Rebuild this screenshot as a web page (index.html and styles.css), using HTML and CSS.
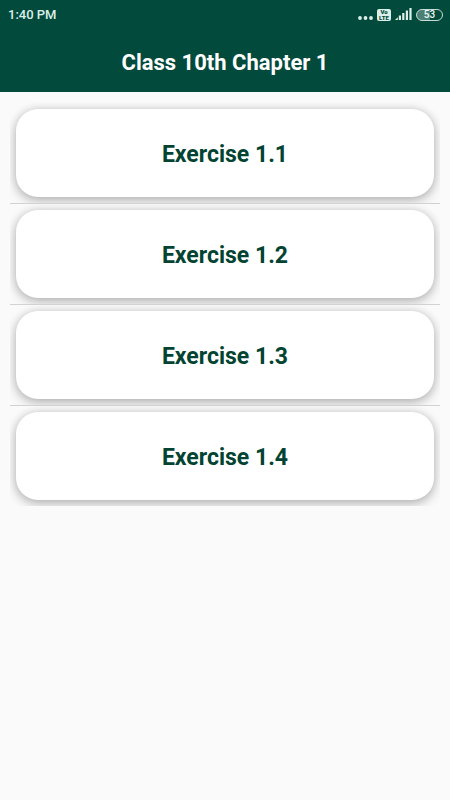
FILE: index.html
```html
<!DOCTYPE html>
<html lang="en">
<head>
<meta charset="utf-8">
<meta name="viewport" content="width=device-width, initial-scale=1">
<title>Class 10th Chapter 1</title>
<link rel="stylesheet" href="styles.css">
</head>
<body>
<header class="top">
  <div class="status">
    <span class="clock">1:40 PM</span>
    <div class="indicators">
      <svg width="15" height="16" viewBox="0 0 15 16" aria-hidden="true"><g fill="#dcefe9"><circle cx="2" cy="11" r="1.9"/><circle cx="7.5" cy="11" r="1.9"/><circle cx="13" cy="11" r="1.9"/></g></svg>
      <span class="volte"><span>Vo</span><span>LTE</span></span>
      <svg width="17" height="16" viewBox="0 0 17 16" aria-hidden="true"><g fill="#dcefe9"><path d="M0 13l2.8-2.8V13z"/><rect x="3.8" y="8.5" width="2.2" height="4.5"/><rect x="7.2" y="6" width="2.2" height="7"/><rect x="10.8" y="3.5" width="2.2" height="9.5"/><rect x="14.4" y="1" width="2.2" height="12"/></g></svg>
      <span class="battery">53</span>
    </div>
  </div>
  <h1 class="title">Class 10th Chapter 1</h1>
</header>
<main>
  <ul class="list">
    <li class="item"><button class="card" type="button">Exercise 1.1</button></li>
    <li class="item"><button class="card" type="button">Exercise 1.2</button></li>
    <li class="item"><button class="card" type="button">Exercise 1.3</button></li>
    <li class="item"><button class="card" type="button">Exercise 1.4</button></li>
  </ul>
</main>
</body>
</html>
```
FILE: styles.css
```css
* {
  box-sizing: border-box;
}

body {
  margin: 0;
  background: #fafafa;
  font-family: Roboto, "Liberation Sans", sans-serif;
}

.top {
  padding-bottom: 14px;
  background: #024a3c;
  color: #fff;
}

.status {
  display: flex;
  align-items: center;
  justify-content: space-between;
  height: 30px;
  padding: 0 7px 0 8px;
}

.clock {
  color: #dcefe9;
  font-size: 13px;
  font-weight: 500;
  line-height: 16px;
}

.indicators {
  display: flex;
  align-items: center;
  gap: 4px;
}

.volte {
  display: flex;
  flex-direction: column;
  align-items: center;
  width: 14px;
  border-radius: 2px;
  background: #dcefe9;
  color: #024a3c;
  font-size: 6px;
  font-weight: 900;
  line-height: 6px;
}

.battery {
  width: 27px;
  border: 1px solid #c4dcd5;
  border-radius: 6px;
  background: linear-gradient(90deg, #4d8074 53%, #024a3c 53%);
  color: #f0faf7;
  font-size: 10px;
  font-weight: 500;
  line-height: 10px;
  text-align: center;
}

.title {
  margin: 0;
  padding-top: 18px;
  font-size: 22px;
  font-weight: 700;
  line-height: 30px;
  text-align: center;
}

.list {
  margin: 0;
  padding: 10px;
  list-style: none;
}

.item {
  overflow: hidden;
  padding: 6px;
}

.item:first-child {
  padding-top: 7px;
}

.item + .item {
  border-top: 1px solid #d2d2d2;
}

.card {
  display: block;
  width: 100%;
  height: 88px;
  padding: 4px 0 0;
  border: 0;
  border-radius: 22px;
  background: #fff;
  box-shadow: 0 4px 12px rgba(0, 0, 0, 0.24), 0 0 8px rgba(0, 0, 0, 0.12);
  color: #024332;
  font-family: inherit;
  font-size: 23px;
  font-weight: 700;
  line-height: 28px;
}
```
